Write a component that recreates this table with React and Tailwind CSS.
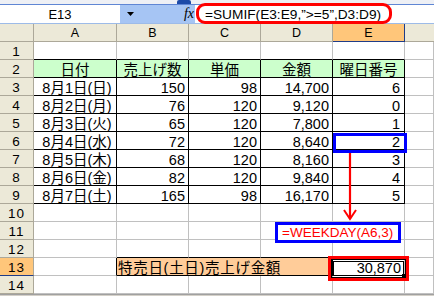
import React from "react";

const rows = [
  ["8月1日(日)", "150", "98", "14,700", "6"],
  ["8月2日(月)", "76", "120", "9,120", "0"],
  ["8月3日(火)", "65", "120", "7,800", "1"],
  ["8月4日(水)", "72", "120", "8,640", "2"],
  ["8月5日(木)", "68", "120", "8,160", "3"],
  ["8月6日(金)", "82", "120", "9,840", "4"],
  ["8月7日(土)", "165", "98", "16,170", "5"],
];

const headers = ["日付", "売上げ数", "単価", "金額", "曜日番号"];

function bcls(br, bb) {
  const r = br ? "border-r-black" : "border-r-[#c0c0c0]";
  const b = bb ? "border-b-black" : "border-b-[#c0c0c0]";
  return `border-r border-b ${r} ${b}`;
}

const txt = "pt-[2px] leading-[17px] whitespace-nowrap text-[14.5px]";

function RowHeader({ n }) {
  const active = n === 13;
  return (
    <div
      className={
        active
          ? "bg-[#ffc67a] border-r border-b border-r-[#aca899] border-b-[#1f3c88] flex items-center justify-center pt-[2px] text-[13.5px] tracking-[1px] leading-none"
          : "bg-[#ece9d8] border-r border-b border-[#aca899] flex items-center justify-center pt-[2px] text-[13.5px] tracking-[1px] leading-none"
      }
    >
      {n}
    </div>
  );
}

function EmptyRow({ n, blackBottom, blackBottomBD }) {
  return (
    <>
      <RowHeader n={n} />
      {[0, 1, 2, 3, 4, 5].map((c) => {
        const bb = (blackBottom && c <= 4) || (blackBottomBD && c >= 1 && c <= 3);
        return <div key={c} className={bcls(false, bb)} />;
      })}
    </>
  );
}

export default function App() {
  return (
    <div className="relative w-[434px] h-[296px] overflow-hidden bg-white text-black font-['Liberation_Sans','Noto_Sans_CJK_JP',sans-serif]">
      {/* top strip */}
      <div className="h-[4px] flex bg-[#eef0f5]">
        <div className="w-[177px]" />
        <div className="w-[14px] bg-[#1c4aa8] rounded-t-[2px]" />
      </div>
      <div className="h-[1px] bg-[#5f86d4]" />
      {/* formula bar */}
      <div className="flex h-[18px]">
        <div className="w-[120px] bg-white flex items-center justify-center text-[13px] leading-none pt-[1px]">
          E13
        </div>
        <div className="w-[75px] bg-[#a6c5f4] flex items-center justify-between pl-[7px] pr-[1px]">
          <svg width="7" height="4" viewBox="0 0 7 4">
            <path d="M0 0 H7 L3.5 4 Z" fill="#000" />
          </svg>
          <span className="font-['Liberation_Serif',serif] italic text-[14px] leading-none">fx</span>
        </div>
        <div className="flex-1 bg-white flex items-center pl-[10px] text-[13.7px] leading-none pt-[1px] whitespace-nowrap">
          =SUMIF(E3:E9,”&gt;=5”,D3:D9)
        </div>
      </div>
      <div className="h-[1px] bg-[#9dbbe8]" />

      {/* grid */}
      <div className="grid grid-cols-[34px_83px_72px_72px_72px_72px_29px] auto-rows-[18px]">
        {/* column headers */}
        <div className="bg-[#ece9d8] border-r border-b border-[#aca899]" />
        {["A", "B", "C", "D"].map((c) => (
          <div
            key={c}
            className="bg-[#ece9d8] border-r border-b border-[#aca899] flex items-center justify-center pt-[1px] text-[12.5px] leading-none"
          >
            {c}
          </div>
        ))}
        <div className="bg-[#ffc67a] border-r border-b border-r-[#1f3c88] border-b-[#1f3c88] flex items-center justify-center pt-[1px] text-[12.5px] leading-none">
          E
        </div>
        <div className="bg-[#ece9d8] border-b border-[#aca899]" />

        {/* row 1 */}
        <EmptyRow n={1} blackBottom />

        {/* row 2 headers */}
        <RowHeader n={2} />
        {headers.map((h) => (
          <div key={h} className={`${bcls(true, true)} bg-[#ccffcc] text-center ${txt}`}>
            {h}
          </div>
        ))}
        <div className={bcls(false, false)} />

        {/* rows 3-9 */}
        {rows.map((r, i) => (
          <React.Fragment key={i}>
            <RowHeader n={i + 3} />
            <div className={`${bcls(true, true)} text-center pl-[4px] ${txt}`}>{r[0]}</div>
            <div className={`${bcls(true, true)} text-right pr-[3px] ${txt}`}>{r[1]}</div>
            <div className={`${bcls(true, true)} text-right pr-[3px] ${txt}`}>{r[2]}</div>
            <div className={`${bcls(true, true)} text-right pr-[3px] ${txt}`}>{r[3]}</div>
            <div className={`${bcls(true, true)} text-right pr-[4px] ${txt}`}>{r[4]}</div>
            <div className={bcls(false, false)} />
          </React.Fragment>
        ))}

        <EmptyRow n={10} />
        <EmptyRow n={11} />
        <EmptyRow n={12} blackBottomBD />

        {/* row 13 */}
        <RowHeader n={13} />
        <div className={bcls(true, false)} />
        <div className={`col-span-3 ${bcls(true, true)} bg-[#ffcc99] text-left pl-[1px] tracking-[0.7px] ${txt}`}>
          特売日(土日)売上げ金額
        </div>
        <div className={`${bcls(false, false)} text-right pr-[3px] ${txt}`}>30,870</div>
        <div className={bcls(false, false)} />

        <EmptyRow n={14} />
      </div>
      <div className="h-[2px] bg-[#d4d0c8] border-t border-[#a0a0a0]" />

      {/* annotations */}
      <div className="absolute left-[196px] top-[3px] w-[196px] h-[21px] border-[3px] border-[#ff0000] rounded-[9px]" />

      <div className="absolute left-[333px] top-[133px] w-[74px] h-[20px] border-[3px] border-[#0000ff]" />

      <svg className="absolute left-[340px] top-[153px]" width="20" height="70" viewBox="0 0 20 70">
        <line x1="10" y1="0" x2="10" y2="66" stroke="#ff0000" strokeWidth="2.2" />
        <polyline points="4,57 10,66 16,57" fill="none" stroke="#ff0000" strokeWidth="2" />
      </svg>

      <div className="absolute left-[275px] top-[222px] w-[126px] h-[21px] border-[3px] border-[#0000ff] bg-white flex items-center pl-[4px] text-[#ff0000] text-[13.5px] leading-none pt-[1px] whitespace-nowrap">
        =WEEKDAY(A6,3)
      </div>

      <div className="absolute left-[328px] top-[256px] w-[81px] h-[25px] border-[3px] border-[#ff0000]">
        <div className="w-full h-full border border-black p-[1px]">
          <div className="relative w-full h-full border border-black">
            <div className="absolute right-[-3px] bottom-[-3px] w-[4px] h-[4px] bg-black" />
          </div>
        </div>
      </div>
    </div>
  );
}
